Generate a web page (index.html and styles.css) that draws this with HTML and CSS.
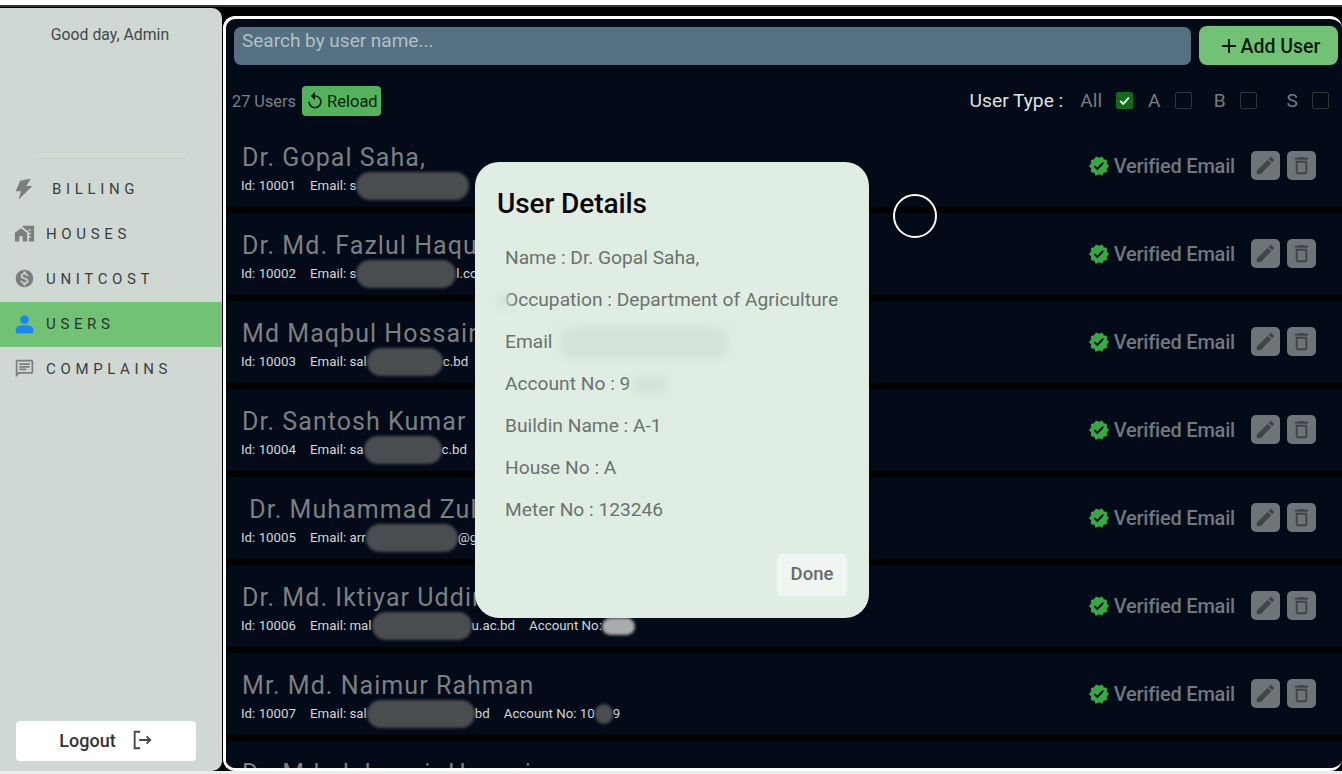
FILE: index.html
```html
<!DOCTYPE html>
<html lang="en">
<head>
  <meta charset="UTF-8" />
  <meta name="viewport" content="width=device-width, initial-scale=1.0"/>
  <title>Users</title>
  <link rel="stylesheet" href="styles.css">
</head>
<body>

  <!-- icon sprite -->
  <svg class="sprite" xmlns="http://www.w3.org/2000/svg">
    <symbol id="i-bolt" viewBox="0 0 24 24"><path d="M17 1 7 3 2 15h6L5 25 21 9h-7l5-8z"/></symbol>
    <symbol id="i-houses" viewBox="0 0 24 24"><path d="M1 11v10h5v-6h4v6h5V11L8 6z"/><path d="M10 3v1.97l7 5V11h2v2h-2v2h2v2h-2v4h6V3H10zm9 6h-2V7h2v2z"/></symbol>
    <symbol id="i-money" viewBox="0 0 24 24"><path d="M12 2C6.48 2 2 6.48 2 12s4.48 10 10 10 10-4.48 10-10S17.52 2 12 2zm1.41 16.09V20h-2.67v-1.93c-1.71-.36-3.16-1.46-3.27-3.4h1.96c.1 1.05.82 1.87 2.65 1.87 1.96 0 2.4-.98 2.4-1.59 0-.83-.44-1.61-2.67-2.14-2.48-.6-4.18-1.62-4.18-3.67 0-1.72 1.39-2.84 3.11-3.21V4h2.67v1.95c1.86.45 2.79 1.86 2.85 3.39H14.3c-.05-1.11-.64-1.87-2.22-1.87-1.5 0-2.4.68-2.4 1.64 0 .84.65 1.39 2.67 1.91s4.18 1.39 4.18 3.91c-.01 1.83-1.38 2.83-3.12 3.16z"/></symbol>
    <symbol id="i-user" viewBox="0 0 24 24"><circle cx="12" cy="7.5" r="5"/><path d="M2 22v-2.5C2 15.5 6 14 12 14s10 1.500 10 5.500V22c0 .6-.5 1-1 1H3c-.5 0-1-.4-1-1z"/></symbol>
    <symbol id="i-chat" viewBox="0 0 24 24"><path d="M20 2H4c-1.100 0-2 .9-2 2v18l4-4h14c1.100 0 2-.9 2-2V4c0-1.100-.9-2-2-2zm0 14H5.170L4 17.170V4h16v12z"/><path d="M6 12h8v2H6zm0-3h12v2H6zm0-3h12v2H6z"/></symbol>
    <symbol id="i-verified" viewBox="0 0 24 24"><path d="M23 12l-2.440-2.790.34-3.690-3.610-.82-1.890-3.200L12 2.960 8.600 1.500 6.710 4.690 3.100 5.500l.34 3.700L1 12l2.440 2.790-.34 3.700 3.610.82L8.600 22.500l3.400-1.470 3.400 1.460 1.890-3.190 3.610-.82-.34-3.690L23 12zm-12.910 4.720l-3.800-3.810 1.480-1.480 2.320 2.330 5.850-5.870 1.480 1.480-7.330 7.350z"/></symbol>
    <symbol id="i-edit" viewBox="0 0 24 24"><path d="M3 17.250V21h3.750L17.810 9.940l-3.750-3.750L3 17.250zM20.710 7.040c.39-.39.39-1.020 0-1.410l-2.340-2.340c-.39-.39-1.020-.39-1.410 0l-1.830 1.830 3.750 3.750 1.830-1.830z"/></symbol>
    <symbol id="i-trash" viewBox="0 0 24 24"><path d="M6 19c0 1.100.9 2 2 2h8c1.100 0 2-.9 2-2V7H6v12zM8 9h8v10H8V9zm7.500-5l-1-1h-5l-1 1H5v2h14V4z"/></symbol>
  </svg>

  <div class="top-strip"></div>

  <div class="app">
    <aside class="sidebar">
      <p class="greeting">Good day, Admin</p>
      <hr class="divider">
      <nav class="nav">
        <a class="nav-item nav-billing"><svg class="nav-icon"><use href="#i-bolt"/></svg>BILLING</a>
        <a class="nav-item"><svg class="nav-icon"><use href="#i-houses"/></svg>HOUSES</a>
        <a class="nav-item"><svg class="nav-icon"><use href="#i-money"/></svg>UNITCOST</a>
        <a class="nav-item active"><svg class="nav-icon"><use href="#i-user"/></svg>USERS</a>
        <a class="nav-item"><svg class="nav-icon"><use href="#i-chat"/></svg>COMPLAINS</a>
      </nav>
      <button class="logout">Logout
        <svg class="logout-icon" viewBox="0 0 24 24" fill="none" stroke="currentColor" stroke-width="2"><path d="M10 3H4v18h6"/><path d="M9 12h12M17 8l4 4-4 4"/></svg>
      </button>
    </aside>

    <main class="main">
      <div class="search-row">
        <div class="search">Search by user name...</div>
        <button class="add-user"><svg class="add-icon" viewBox="0 0 24 24"><path d="M19 13h-6v6h-2v-6H5v-2h6V5h2v6h6v2z"/></svg>Add User</button>
      </div>

      <div class="filter-row">
        <span class="count">27 Users</span>
        <button class="reload"><svg class="reload-icon" viewBox="0 0 24 24"><path d="M12 5V1L7 6l5 5V7c3.310 0 6 2.690 6 6s-2.690 6-6 6-6-2.690-6-6H4c0 4.420 3.580 8 8 8s8-3.580 8-8-3.580-8-8-8z"/></svg>Reload</button>
        <div class="types">
          <span class="types-label">User Type :</span>
          <span class="type type-all">All</span><span class="box checked"><svg viewBox="0 0 24 24" fill="none" stroke="#fff" stroke-width="3"><path d="M5 12.500l5 5 9-10"/></svg></span>
          <span class="type type-a">A</span><span class="box"></span>
          <span class="type type-b">B</span><span class="box"></span>
          <span class="type type-s">S</span><span class="box"></span>
        </div>
      </div>

      <div class="list">
        <div class="row">
          <div class="who">
            <div class="name">Dr. Gopal Saha,</div>
            <div class="meta"><span>Id: 10001</span><span>Email: s<i class="smudge w-113"></i></span></div>
          </div>
          <div class="actions">
            <svg class="check"><use href="#i-verified"/></svg><span class="verified">Verified Email</span>
            <button class="square first"><svg><use href="#i-edit"/></svg></button>
            <button class="square"><svg><use href="#i-trash"/></svg></button>
          </div>
        </div>
        <div class="row">
          <div class="who">
            <div class="name">Dr. Md. Fazlul Haqu</div>
            <div class="meta"><span>Id: 10002</span><span>Email: s<i class="smudge w-100"></i>l.co</span></div>
          </div>
          <div class="actions">
            <svg class="check"><use href="#i-verified"/></svg><span class="verified">Verified Email</span>
            <button class="square first"><svg><use href="#i-edit"/></svg></button>
            <button class="square"><svg><use href="#i-trash"/></svg></button>
          </div>
        </div>
        <div class="row">
          <div class="who">
            <div class="name">Md Maqbul Hossain</div>
            <div class="meta"><span>Id: 10003</span><span>Email: sal<i class="smudge w-76"></i>c.bd</span></div>
          </div>
          <div class="actions">
            <svg class="check"><use href="#i-verified"/></svg><span class="verified">Verified Email</span>
            <button class="square first"><svg><use href="#i-edit"/></svg></button>
            <button class="square"><svg><use href="#i-trash"/></svg></button>
          </div>
        </div>
        <div class="row">
          <div class="who">
            <div class="name">Dr. Santosh Kumar</div>
            <div class="meta"><span>Id: 10004</span><span>Email: sa<i class="smudge w-78"></i>c.bd</span></div>
          </div>
          <div class="actions">
            <svg class="check"><use href="#i-verified"/></svg><span class="verified">Verified Email</span>
            <button class="square first"><svg><use href="#i-edit"/></svg></button>
            <button class="square"><svg><use href="#i-trash"/></svg></button>
          </div>
        </div>
        <div class="row">
          <div class="who">
            <div class="name">&nbsp;Dr. Muhammad Zul</div>
            <div class="meta"><span>Id: 10005</span><span>Email: arr<i class="smudge w-92"></i>@g</span></div>
          </div>
          <div class="actions">
            <svg class="check"><use href="#i-verified"/></svg><span class="verified">Verified Email</span>
            <button class="square first"><svg><use href="#i-edit"/></svg></button>
            <button class="square"><svg><use href="#i-trash"/></svg></button>
          </div>
        </div>
        <div class="row">
          <div class="who">
            <div class="name">Dr. Md. Iktiyar Uddir</div>
            <div class="meta"><span>Id: 10006</span><span>Email: mal<i class="smudge w-100"></i>u.ac.bd</span><span>Account No:<i class="smudge light w-33"></i></span></div>
          </div>
          <div class="actions">
            <svg class="check"><use href="#i-verified"/></svg><span class="verified">Verified Email</span>
            <button class="square first"><svg><use href="#i-edit"/></svg></button>
            <button class="square"><svg><use href="#i-trash"/></svg></button>
          </div>
        </div>
        <div class="row">
          <div class="who">
            <div class="name">Mr. Md. Naimur Rahman</div>
            <div class="meta"><span>Id: 10007</span><span>Email: sal<i class="smudge w-108"></i>bd</span><span>Account No: 10<i class="smudge w-18"></i>9</span></div>
          </div>
          <div class="actions">
            <svg class="check"><use href="#i-verified"/></svg><span class="verified">Verified Email</span>
            <button class="square first"><svg><use href="#i-edit"/></svg></button>
            <button class="square"><svg><use href="#i-trash"/></svg></button>
          </div>
        </div>
        <div class="row">
          <div class="who">
            <div class="name">Dr. Md. Jahangir Hossain</div>
          </div>
        </div>
      </div>
    </main>
  </div>

  <div class="bottom-strip"></div>

  <!-- dialog on top of the list -->
  <div class="modal">
    <h2 class="modal-title">User Details</h2>
    <p class="modal-line">Name : Dr. Gopal Saha,</p>
    <p class="modal-line"><i class="smudge pale w-14 lead"></i>Occupation : Department of Agriculture</p>
    <p class="modal-line">Email<i class="smudge pale w-170 gap"></i></p>
    <p class="modal-line">Account No : 9<i class="smudge pale w-36"></i></p>
    <p class="modal-line">Buildin Name : A-1</p>
    <p class="modal-line">House No : A</p>
    <p class="modal-line">Meter No : 123246</p>
    <div class="modal-foot"><button class="done">Done</button></div>
  </div>

  <!-- click marker from the recording -->
  <div class="cursor-ring"></div>

</body>
</html>
```

FILE: styles.css
```css
* {
  box-sizing: border-box;
}
body {
  margin: 0;
  height: 774px;
  overflow: hidden;
  position: relative;
  background: #000;
  font-family: Roboto, "Liberation Sans", sans-serif;
  display: flex;
  flex-direction: column;
}
button {
  font-family: inherit;
  border: none;
  cursor: pointer;
}
.sprite {
  display: none;
}
.top-strip {
  height: 7px;
  background: #fff;
  border-bottom: 2px solid #333;
  flex: none;
}
.bottom-strip {
  height: 3px;
  background: #e8ecf1;
  flex: none;
}
.app {
  flex: 1;
  min-height: 0;
  display: flex;
}

/* sidebar */
.sidebar {
  width: 222px;
  flex: none;
  margin-top: 1px;
  padding-bottom: 10px;
  background: #d0d8d3;
  border-top-right-radius: 10px;
  border-bottom-right-radius: 10px;
  display: flex;
  flex-direction: column;
  align-items: center;
}
.greeting {
  margin: 18px 2px 0 0;
  font-size: 15.800px;
  line-height: 18px;
  color: #44484a;
}
.divider {
  width: 150px;
  height: 1px;
  margin: 114px 0 8px;
  border: none;
  background: #c4cfc4;
}
.nav {
  width: 100%;
}
.nav-item {
  height: 45px;
  padding: 0 0 2px 14px;
  display: flex;
  align-items: center;
  gap: 11px;
  font-size: 15px;
  letter-spacing: 4.650px;
  color: #3a3e3f;
}
.nav-billing {
  gap: 17px;
}
.nav-item.active {
  background: #72c276;
  color: #25352a;
}
.nav-icon {
  width: 21px;
  height: 21px;
  flex: none;
  fill: #7b807e;
}
.active .nav-icon {
  fill: #1c86f2;
}
.logout {
  margin: auto 10px 0 0;
  width: 180px;
  height: 40px;
  padding: 0 0 2px;
  background: #fff;
  border-radius: 4px;
  font-size: 18px;
  font-weight: 500;
  color: #333;
  display: flex;
  align-items: center;
  justify-content: center;
  gap: 15px;
}
.logout-icon {
  width: 22px;
  height: 22px;
  color: #444;
}

/* main panel */
.main {
  flex: 1;
  min-width: 0;
  margin: 9px 0 0 1px;
  background: #020b17;
  border: 3px solid #fff;
  border-right: none;
  border-radius: 12px;
  overflow: hidden;
}
.search-row {
  display: flex;
  align-items: center;
  gap: 8px;
  padding: 7px 4px 0 8px;
}
.search {
  flex: 1;
  height: 38px;
  padding: 3px 8px 0;
  background: #557080;
  border-radius: 7px;
  font-size: 19px;
  line-height: 22px;
  color: #b4c0c7;
}
.add-user {
  width: 139px;
  height: 39px;
  padding: 1px 0 0;
  background: #72c276;
  border-radius: 8px;
  font-size: 19.500px;
  font-weight: 500;
  color: #0c1a10;
  display: flex;
  align-items: center;
  justify-content: center;
}
.add-icon {
  width: 24px;
  height: 24px;
  fill: #0c1a10;
}
.filter-row {
  height: 30px;
  margin-top: 21px;
  padding-left: 6px;
  display: flex;
  align-items: center;
}
.count {
  font-size: 16.300px;
  color: #7a8288;
}
.reload {
  margin-left: 6px;
  width: 79px;
  height: 30px;
  padding: 0;
  background: #52b45a;
  border-radius: 4px;
  font-size: 16.500px;
  color: #0d1a12;
  display: flex;
  align-items: center;
  justify-content: center;
  gap: 2px;
}
.reload-icon {
  width: 20px;
  height: 20px;
  fill: #0d1a12;
}
.types {
  margin-left: auto;
  padding: 0 13px 2px 0;
  display: flex;
  align-items: center;
  font-size: 19.200px;
}
.types-label {
  color: #dfe3e4;
  margin-right: 17px;
}
.type {
  color: #747c82;
}
.type-all { margin-right: 14px; }
.type-a { margin: 0 14px 0 15px; }
.type-b { margin: 0 14px 0 22px; }
.type-s { margin: 0 14px 0 30px; }
.box {
  width: 17px;
  height: 17px;
  border: 1.500px solid #2c3633;
  border-radius: 2px;
}
.box.checked {
  background: #0d6b1a;
  border-color: #0d6b1a;
}
.box svg {
  display: block;
  width: 100%;
  height: 100%;
}

/* user rows */
.list {
  margin-top: 9px;
}
.row {
  height: 82px;
  margin-bottom: 6px;
  padding: 18px 26px 0 16px;
  background: #020b17;
  box-shadow: 0 6px 0 #000;
  display: flex;
  justify-content: space-between;
}
.name {
  font-size: 25px;
  line-height: 30px;
  letter-spacing: 1.050px;
  color: #7b8083;
  white-space: nowrap;
}
.meta {
  margin-top: 5px;
  margin-left: -1px;
  height: 16px;
  font-size: 13.300px;
  line-height: 16px;
  color: #d3d6d8;
  display: flex;
  gap: 14px;
  white-space: nowrap;
}
.actions {
  height: 45px;
  display: flex;
  align-items: center;
}
.check {
  width: 22px;
  height: 22px;
  fill: #37a843;
  margin-right: 4px;
}
.verified {
  font-size: 20px;
  font-weight: 500;
  color: #6f787e;
  letter-spacing: -0.200px;
}
.square {
  width: 29px;
  height: 29px;
  margin-left: 7px;
  padding: 3px;
  background: #6d7579;
  border-radius: 5px;
}
.square.first {
  margin-left: 16px;
}
.square svg {
  display: block;
  width: 23px;
  height: 23px;
  fill: #3f4549;
}

/* blurred out details */
.smudge {
  display: inline-block;
  height: 28px;
  margin: -12px 0;
  vertical-align: middle;
  background: #4b4e51;
  border-radius: 14px;
  filter: blur(1.500px);
}
.smudge.light { height: 17px; background: #a9abac; }
.smudge.pale { background: #d4e2d8; height: 32px; filter: blur(4px); }
.smudge.lead { height: 14px; margin-right: -6px; margin-left: -8px; }
.smudge.gap { margin-left: 6px; }
.w-14 { width: 14px; }
.w-18 { width: 18px; height: 20px; }
.w-33 { width: 33px; }
.w-36 { width: 36px; height: 18px !important; margin-left: 2px !important; }
.w-76 { width: 76px; }
.w-78 { width: 78px; }
.w-92 { width: 92px; }
.w-100 { width: 100px; }
.w-108 { width: 108px; }
.w-113 { width: 113px; }
.w-170 { width: 170px; }

/* dialog */
.modal {
  position: absolute;
  left: 475px;
  top: 162px;
  width: 394px;
  height: 456px;
  padding: 24px 22px 22px;
  background: #e0ede3;
  border-radius: 24px;
  display: flex;
  flex-direction: column;
}
.modal-title {
  margin: 0 0 25px;
  font-size: 28px;
  line-height: 36px;
  font-weight: 500;
  letter-spacing: -0.100px;
  color: #050505;
}
.modal-line {
  margin: 0 0 20px 8px;
  height: 22px;
  font-size: 19.200px;
  line-height: 22px;
  color: #6c726d;
  white-space: nowrap;
}
.modal-foot {
  margin-top: auto;
  display: flex;
  justify-content: flex-end;
}
.done {
  width: 70px;
  height: 42px;
  padding: 0 0 2px;
  background: #eff6f1;
  border-radius: 5px;
  font-size: 18.500px;
  font-weight: 500;
  color: #666b67;
}
.cursor-ring {
  position: absolute;
  left: 893px;
  top: 194px;
  width: 44px;
  height: 44px;
  border: 2px solid #fff;
  border-radius: 50%;
}
```
